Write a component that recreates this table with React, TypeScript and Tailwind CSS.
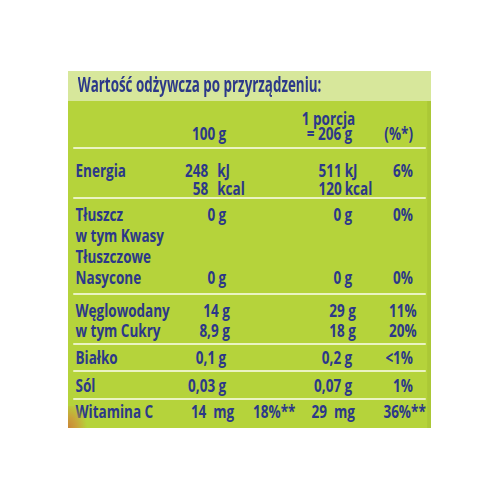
const font = { fontFamily: '"Open Sans", "Liberation Sans", sans-serif' };

type Row = { label: string[]; a: string[]; b: string[]; c: string[]; pad: string };

const rows: Row[] = [
  { label: ["Tłuszcz", "w tym Kwasy", "Tłuszczowe", "Nasycone"], a: ["0 g", "", "", "0 g"], b: ["0 g", "", "", "0 g"], c: ["0%", "", "", "0%"], pad: "pt-[5px] pb-[5px] leading-[21px]" },
  { label: ["Węglowodany", "w tym Cukry"], a: ["14 g", "8,9 g"], b: ["29 g", "18 g"], c: ["11%", "20%"], pad: "pt-[5px] pb-[3px] leading-[20px]" },
  { label: ["Białko"], a: ["0,1 g"], b: ["0,2 g"], c: ["<1%"], pad: "pt-[2px] pb-[3px] leading-[20px]" },
  { label: ["Sól"], a: ["0,03 g"], b: ["0,07 g"], c: ["1%"], pad: "pt-[3px] pb-[3px] leading-[20px]" },
];

function Lines({ items, className }: { items: string[]; className?: string }) {
  return (
    <div className={className}>
      {items.map((t, i) => (
        <div key={i} className="whitespace-pre">{t || "\u00a0"}</div>
      ))}
    </div>
  );
}

export default function App() {
  return (
    <div className="relative w-[500px] h-[500px] overflow-hidden bg-white">
      <div className="pt-[71px] pl-[68px]">
        <div
          className="relative w-[484px] h-[357px] origin-top-left [transform:scaleX(0.75)] bg-[#b5d33b] text-[#2c3889] font-bold text-[18px]"
          style={font}
        >
          <div className="absolute left-0 bottom-0 w-[26px] h-[22px] bg-[radial-gradient(circle_at_0%_100%,#c98637_0,#c9a43a_35%,transparent_75%)]" />
          <div className="absolute right-0 top-[30px] bottom-0 w-[5px] bg-[#abc836]" />

          <div className="h-[30px] bg-[#d7e79b] pl-[13px] text-[21px] leading-[26px]">
            <span className="inline-block origin-left [transform:scaleX(0.85)] whitespace-nowrap">Wartość odżywcza po przyrządzeniu:</span>
          </div>

          <div className="mx-[7px] border-b-2 border-[#eaf3c2]">
            <div className="grid grid-cols-[1fr_80px_168px_81px] pr-[17px] pt-[10px] pb-[6px] leading-[15px]">
              <div />
              <Lines items={["", "100 g"]} className="text-right" />
              <div className="flex flex-col items-end">
                <div className="mr-[-4px]">1 porcja</div>
                <div>= 206 g</div>
              </div>
              <Lines items={["", "(%*)"]} className="text-right" />
            </div>
          </div>

          <div className="mx-[7px] border-b-2 border-[#eaf3c2]">
            <div className="flex pl-[3px] pt-[12px] pb-0 leading-[18px]">
              <div className="w-[121px]">Energia</div>
              <Lines items={["248", "58"]} className="w-[56px] text-right" />
              <Lines items={["kJ", "kcal"]} className="w-[70px] pl-[12px]" />
              <Lines items={["511", "120"]} className="w-[108px] text-right" />
              <Lines items={["kJ", "kcal"]} className="w-[50px] pl-[4px]" />
              <Lines items={["6%", ""]} className="w-[45px] text-right" />
            </div>
          </div>

          {rows.map((r, i) => (
            <div key={i} className="mx-[7px] border-b-2 border-[#eaf3c2]">
              <div className={`grid grid-cols-[1fr_80px_168px_81px] pl-[3px] pr-[17px] ${r.pad}`}>
                <Lines items={r.label} />
                <Lines items={r.a} className="text-right" />
                <Lines items={r.b} className="text-right" />
                <Lines items={r.c} className="text-right" />
              </div>
            </div>
          ))}

          <div className="mx-[7px]">
            <div className="flex pl-[3px] pt-[1px] leading-[20px] whitespace-pre">
              <div className="w-[121px]">Witamina C</div>
              <div className="w-[92px] text-right">14  mg</div>
              <div className="w-[82px] text-right">18%**</div>
              <div className="w-[80px] text-right">29  mg</div>
              <div className="w-[95px] text-right">36%**</div>
            </div>
          </div>
        </div>
      </div>
    </div>
  );
}
